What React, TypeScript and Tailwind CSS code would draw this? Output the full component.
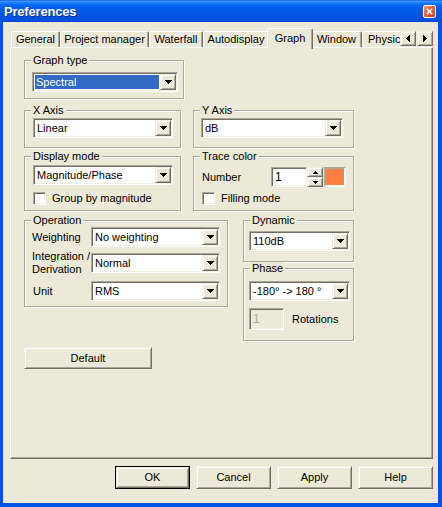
import React from "react";

// classic 3D edges (XP "Windows Classic" control colours)
const sunken =
  "border border-t-[#ACA899] border-l-[#ACA899] border-b-white border-r-white shadow-[inset_1px_1px_0_#716F64,inset_-1px_-1px_0_#F1EFE2]";
const raised =
  "border border-t-[#F1EFE2] border-l-[#F1EFE2] border-b-[#716F64] border-r-[#716F64] shadow-[inset_1px_1px_0_#fff,inset_-1px_-1px_0_#ACA899]";

function DownArrow() {
  return (
    <svg width="7" height="4" shapeRendering="crispEdges">
      <path d="M0 0h7v1H0zM1 1h5v1H1zM2 2h3v1H2zM3 3h1v1H3z" fill="#000" />
    </svg>
  );
}

function DropBtn() {
  return (
    <div className={`w-[16px] h-full bg-[#ECE9D8] flex items-center justify-center ${raised}`}>
      <DownArrow />
    </div>
  );
}

type ComboProps = {
  value: string;
  className: string;
  selected?: boolean;
};

function Combo({ value, className, selected }: ComboProps) {
  return (
    <div className={`flex h-[20px] bg-white p-[1px] ${sunken} ${className}`}>
      <div className="flex-1 min-w-0 h-full p-[1px]">
        <div
          className={`h-full flex items-center pl-[1px] whitespace-nowrap ${
            selected ? "bg-[#316AC5] text-white" : ""
          }`}
        >
          {value}
        </div>
      </div>
      <DropBtn />
    </div>
  );
}

function Group({
  title,
  className,
  children,
}: {
  title: string;
  className: string;
  children: React.ReactNode;
}) {
  return (
    <fieldset
      className={`border border-[#ACA899] shadow-[1px_1px_0_#fff,inset_1px_1px_0_#fff] ${className}`}
    >
      <legend className="ml-[6px] px-[2px] bg-[#ECE9D8] leading-[13px]">{title}</legend>
      {children}
    </fieldset>
  );
}

function CheckBox({ label, className }: { label: string; className: string }) {
  return (
    <div className={`flex items-center h-[13px] ${className}`}>
      <div className={`w-[13px] h-[13px] bg-white ${sunken}`} />
      <span className="ml-[6px] whitespace-nowrap">{label}</span>
    </div>
  );
}

function Button({ label, className, isDefault }: { label: string; className: string; isDefault?: boolean }) {
  if (isDefault) {
    return (
      <div className={`border border-black ${className}`}>
        <div className={`w-full h-full bg-[#ECE9D8] flex items-center justify-center ${raised}`}>{label}</div>
      </div>
    );
  }
  return (
    <div className={`bg-[#ECE9D8] flex items-center justify-center ${raised} ${className}`}>{label}</div>
  );
}

function Tab({ label, className, active }: { label: string; className: string; active?: boolean }) {
  if (active) {
    return (
      <div
        className={`relative z-10 h-[21px] -mx-[2px] pb-[2px] shrink-0 bg-[#ECE9D8] border-l border-t border-white border-r border-r-[#716F64] rounded-t-[2px] shadow-[inset_-1px_0_0_#ACA899] flex items-center justify-center ${className}`}
      >
        {label}
      </div>
    );
  }
  return (
    <div
      className={`h-[16px] mt-[3px] shrink-0 bg-[#ECE9D8] border-l border-t border-white border-r border-r-[#716F64] rounded-t-[2px] shadow-[inset_-1px_0_0_#ACA899] flex items-center justify-center whitespace-nowrap ${className}`}
    >
      {label}
    </div>
  );
}

function TabStrip() {
  return (
    <div className="relative z-10 ml-[7px] w-[423px] h-[21px] -mb-[2px] flex">
      <div className="flex-1 min-w-0 overflow-hidden flex items-start pl-[1px]">
        <Tab label="General" className="w-[49px]" />
        <Tab label="Project manager" className="w-[89px]" />
        <Tab label="Waterfall" className="w-[54px]" />
        <Tab label="Autodisplay" className="w-[66px]" />
        <Tab label="Graph" className="w-[46px]" active />
        <Tab label="Window" className="w-[51px]" />
        <Tab label="Physic" className="w-[60px] justify-start pl-[5px]" />
      </div>
      <div className="flex gap-[1px] mt-[3px]">
        <div className={`w-[16px] h-[15px] bg-[#ECE9D8] flex items-center justify-center ${raised}`}>
          <svg width="4" height="7" shapeRendering="crispEdges">
            <path d="M3 0h1v7H3zM2 1h1v5H2zM1 2h1v3H1zM0 3h1v1H0z" fill="#000" />
          </svg>
        </div>
        <div className={`w-[16px] h-[15px] bg-[#ECE9D8] flex items-center justify-center ${raised}`}>
          <svg width="4" height="7" shapeRendering="crispEdges">
            <path d="M0 0h1v7H0zM1 1h1v5H1zM2 2h1v3H2zM3 3h1v1H3z" fill="#000" />
          </svg>
        </div>
      </div>
    </div>
  );
}

function TitleBar() {
  return (
    <div className="h-[22px] flex items-center justify-between pl-[4px] pr-[6px] bg-[linear-gradient(to_bottom,#0A5CEB_0%,#3D95FF_6%,#1C83FF_12%,#0369F6_22%,#0059E8_45%,#0054E3_75%,#0050DD_92%,#0046D0_100%)]">
      <span className="text-white font-bold text-[13px] leading-none tracking-[-0.2px] [text-shadow:1px_1px_0_#0A2A9A]">
        Preferences
      </span>
      <div className="w-[13px] h-[13px] rounded-[2px] border border-white bg-[linear-gradient(135deg,#F09A7E_0%,#E4603C_45%,#C8401E_100%)] flex items-center justify-center">
        <svg width="7" height="7" viewBox="0 0 7 7">
          <path d="M0.8 0.8L6.2 6.2M6.2 0.8L0.8 6.2" stroke="#fff" strokeWidth="1.6" />
        </svg>
      </div>
    </div>
  );
}

export default function App() {
  return (
    <div className="w-[442px] h-[507px] overflow-hidden bg-[#0054E3] font-['Liberation_Sans',Arial,sans-serif] text-[11px] leading-[13px] text-black select-none">
      <TitleBar />
      <div className="pl-[3px] pr-[4px] pb-[4px]">
        <div className="w-[435px] h-[481px] bg-[#ECE9D8] flex flex-col pt-[6px]">
          <TabStrip />

          <div className="ml-[7px] w-[423px] h-[412px] border border-t-white border-l-white border-r-[#716F64] border-b-[#716F64] shadow-[inset_-1px_-1px_0_#ACA899] pl-[13px] pt-[6px]">
            {/* Graph type */}
            <Group title="Graph type" className="w-[160px]">
              <Combo value="Spectral" className="w-[146px] ml-[7px] mt-[5px] mb-[6px]" selected />
            </Group>

            {/* axes */}
            <div className="flex gap-[12px] mt-[5px]">
              <Group title="X Axis" className="w-[157px]">
                <Combo value="Linear" className="w-[140px] ml-[8px] mt-[1px] mb-[9px]" />
              </Group>
              <Group title="Y Axis" className="w-[161px]">
                <Combo value="dB" className="w-[142px] ml-[7px] mt-[1px] mb-[9px]" />
              </Group>
            </div>

            {/* display mode / trace color */}
            <div className="flex gap-[12px] mt-[2px]">
              <Group title="Display mode" className="w-[157px]">
                <Combo value="Magnitude/Phase" className="w-[140px] ml-[8px] mt-[2px]" />
                <CheckBox label="Group by magnitude" className="ml-[8px] mt-[7px] mb-[5px]" />
              </Group>
              <Group title="Trace color" className="w-[161px]">
                <div className="flex items-center ml-[8px] mt-[4px]">
                  <span className="w-[69px]">Number</span>
                  <div className={`w-[36px] h-[20px] bg-white flex items-center pl-[3px] text-[12px] ${sunken}`}>1</div>
                  <div className="w-[16px] h-[20px] flex flex-col">
                    <div className={`h-[10px] bg-[#ECE9D8] flex items-center justify-center ${raised}`}>
                      <svg width="5" height="3" shapeRendering="crispEdges">
                        <path d="M2 0h1v1H2zM1 1h3v1H1zM0 2h5v1H0z" fill="#000" />
                      </svg>
                    </div>
                    <div className={`h-[10px] bg-[#ECE9D8] flex items-center justify-center ${raised}`}>
                      <svg width="5" height="3" shapeRendering="crispEdges">
                        <path d="M0 0h5v1H0zM1 1h3v1H1zM2 2h1v1H2z" fill="#000" />
                      </svg>
                    </div>
                  </div>
                  <div className="ml-[1px] w-[22px] h-[20px] bg-[#FF7F40] border-2 border-t-[#ACA899] border-l-[#ACA899] border-b-white border-r-white" />
                </div>
                <CheckBox label="Filling mode" className="ml-[8px] mt-[5px] mb-[5px]" />
              </Group>
            </div>

            {/* operation / dynamic / phase */}
            <div className="flex items-start gap-[15px] mt-[3px]">
              <Group title="Operation" className="w-[204px]">
                <div className="flex items-center">
                  <span className="w-[66px] pl-[7px]">Weighting</span>
                  <Combo value="No weighting" className="w-[129px]" />
                </div>
                <div className="flex items-center mt-[3px]">
                  <span className="w-[66px] pl-[7px] whitespace-nowrap">
                    Integration /<br />
                    Derivation
                  </span>
                  <Combo value="Normal" className="w-[129px]" />
                </div>
                <div className="flex items-center mt-[5px] mb-[5px]">
                  <span className="w-[66px] pl-[8px]">Unit</span>
                  <Combo value="RMS" className="w-[129px]" />
                </div>
              </Group>

              <div className="flex flex-col w-[111px]">
                <Group title="Dynamic" className="w-[111px]">
                  <Combo value="110dB" className="w-[101px] ml-[5px] mt-[4px] mb-[10px]" />
                </Group>
                <Group title="Phase" className="w-[111px]">
                  <Combo value="-180° -> 180 °" className="w-[101px] ml-[5px] mt-[6px]" />
                  <div className="flex items-center ml-[5px] mt-[7px] mb-[10px]">
                    <div className={`w-[35px] h-[22px] bg-[#ECE9D8] text-[#ACA899] flex items-center pl-[3px] text-[12px] ${sunken}`}>
                      1
                    </div>
                    <span className="ml-[8px]">Rotations</span>
                  </div>
                </Group>
              </div>
            </div>

            <Button label="Default" className="w-[128px] h-[22px] mt-[6px]" />
          </div>

          <div className="mt-[7px] mr-[5px] flex justify-end gap-[6px]">
            <Button label="OK" className="w-[75px] h-[23px]" isDefault />
            <Button label="Cancel" className="w-[75px] h-[23px]" />
            <Button label="Apply" className="w-[75px] h-[23px]" />
            <Button label="Help" className="w-[75px] h-[23px]" />
          </div>
        </div>
      </div>
    </div>
  );
}
